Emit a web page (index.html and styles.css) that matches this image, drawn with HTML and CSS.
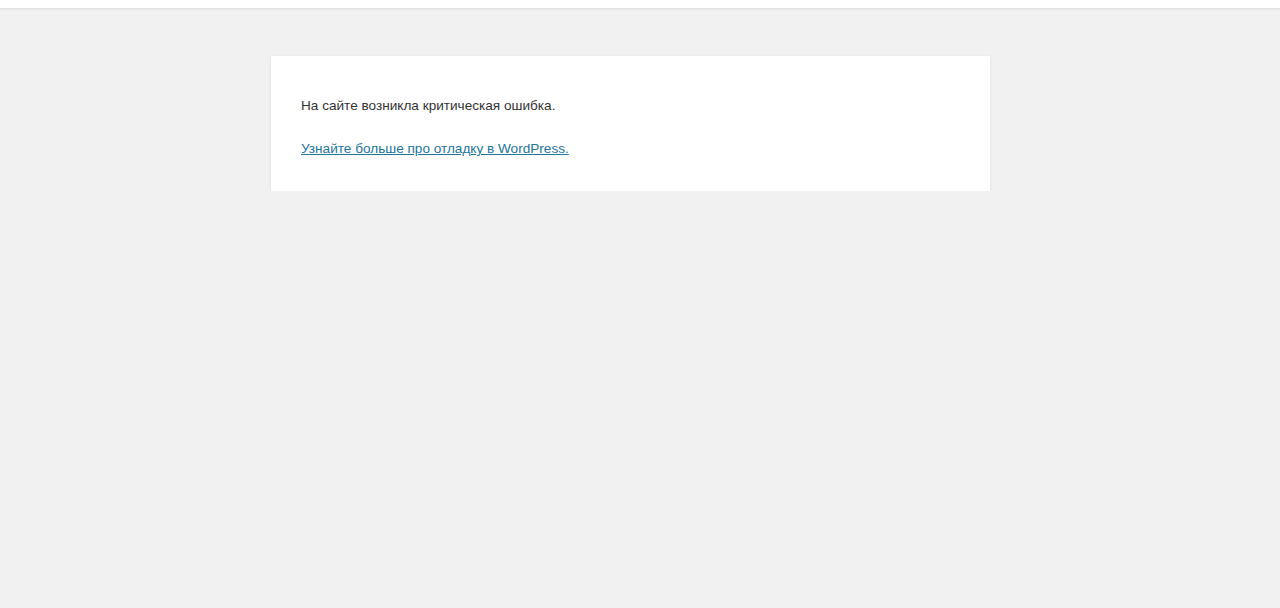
FILE: index.html
```html
<!DOCTYPE html>
<html lang="ru">
<head>
    <meta charset="UTF-8">
    <title>Ошибка WordPress</title>
    <link rel="stylesheet" href="styles.css">
</head>
<body>

<div class="topbar"></div>

<div class="page">
    <div class="die-message">
        <p>На сайте возникла критическая ошибка.</p>
        <p><a href="#">Узнайте больше про отладку в WordPress.</a></p>
    </div>
</div>

</body>
</html>
```
FILE: styles.css
```css
/* Общий стиль */
html, body {
    margin: 0;
    padding: 0;
}
body {
    background-color: #f1f1f1;
    color: #333;
    font-family: "Liberation Sans", Arial, sans-serif;
    font-size: 13.6px;
}
.topbar {
    height: 8px;
    background-color: #fff;
    border-bottom: 1px solid #e2e2e2;
    box-shadow: 0 1px 1px #ebebeb;
}
.page {
    padding: 47px 0 0 271px;
}
.die-message {
    width: 659px;
    padding: 40px 30px 33px;
    background-color: #fff;
    box-shadow: 0 1px 3px rgba(0, 0, 0, 0.1);
}
.die-message p {
    margin: 0 0 24px;
    line-height: 19px;
}
.die-message p:last-child {
    margin-bottom: 0;
}
.die-message a {
    color: #21759b;
}
```
